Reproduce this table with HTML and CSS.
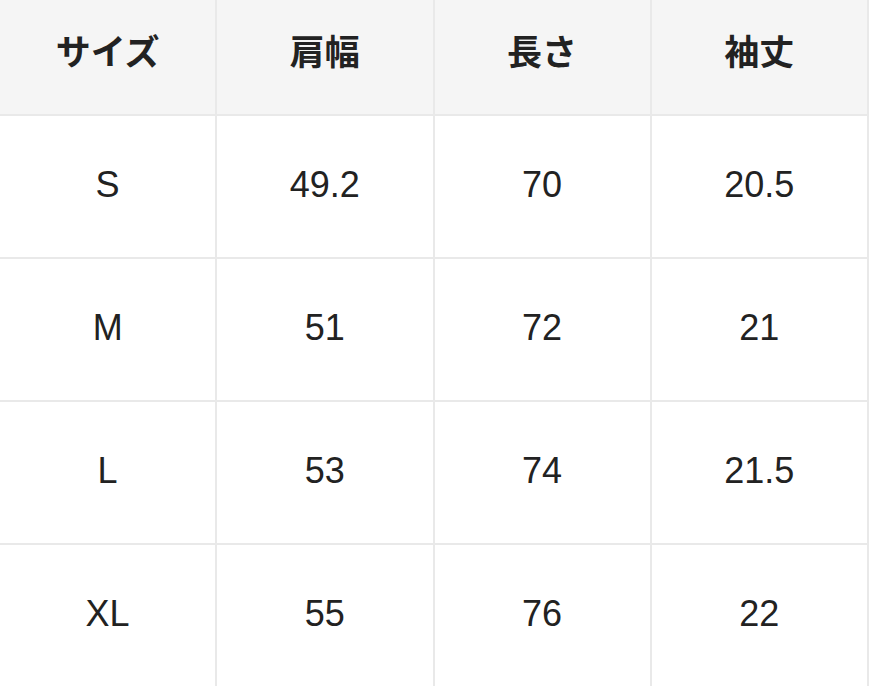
FILE: index.html
```html
<!DOCTYPE html>
<html lang="ja">
<head>
<meta charset="utf-8">
<link rel="stylesheet" href="styles.css">
</head>
<body>
<table class="size-table">
  <thead>
    <tr><th>サイズ</th><th>肩幅</th><th>長さ</th><th>袖丈</th></tr>
  </thead>
  <tbody>
    <tr><td>S</td><td>49.2</td><td>70</td><td>20.5</td></tr>
    <tr><td>M</td><td>51</td><td>72</td><td>21</td></tr>
    <tr><td>L</td><td>53</td><td>74</td><td>21.5</td></tr>
    <tr><td>XL</td><td>55</td><td>76</td><td>22</td></tr>
  </tbody>
</table>
</body>
</html>
```
FILE: styles.css
```css
html, body {
  margin: 0;
  padding: 0;
  background: #ffffff;
  overflow: hidden;
}
.size-table {
  width: 871px;
  margin: -2px 0 0 -2px;
  border-collapse: collapse;
  table-layout: fixed;
  font-family: "Liberation Sans", Arial, "Noto Sans CJK JP", sans-serif;
  color: #222222;
}
.size-table th,
.size-table td {
  border: 2px solid #e9e9e9;
  text-align: center;
  vertical-align: middle;
  padding: 0;
}
.size-table th {
  height: 116px;
  box-sizing: border-box;
  padding-bottom: 16px;
  background: #f5f5f5;
  font-family: "Noto Sans CJK JP", sans-serif;
  font-weight: 700;
  font-size: 35px;
  color: #222222;
}
.size-table td {
  height: 143px;
  box-sizing: border-box;
  padding-bottom: 3px;
  font-size: 36px;
}
```
